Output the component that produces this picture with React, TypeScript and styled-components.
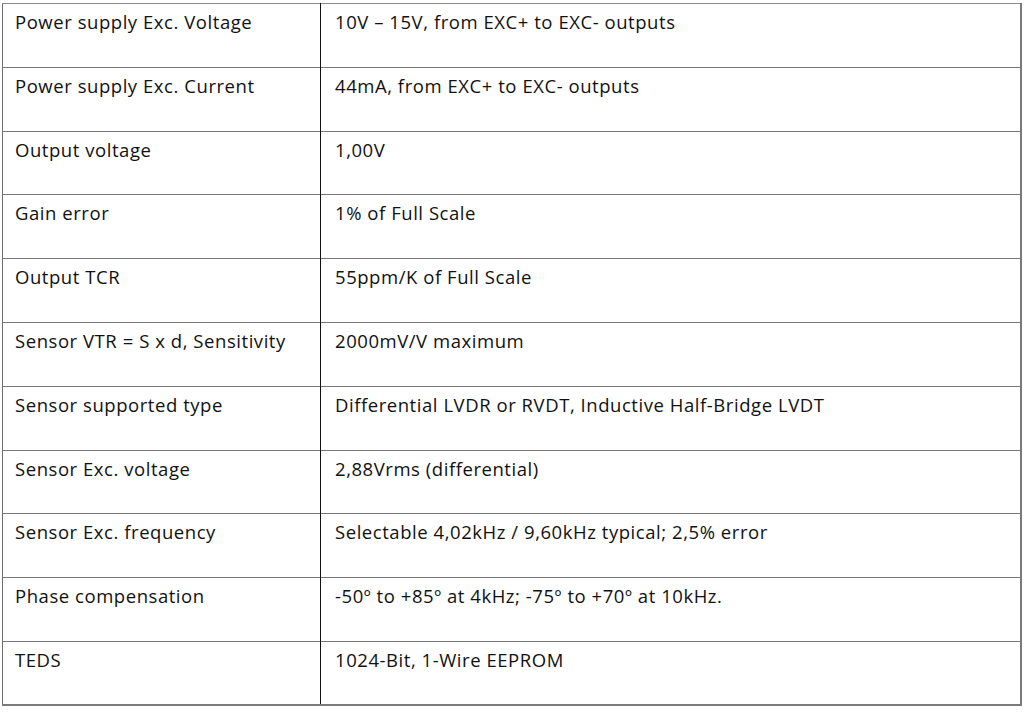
import React from 'react';
import styled, { createGlobalStyle } from 'styled-components';

const GlobalStyle = createGlobalStyle`
    html, body {
        margin: 0;
        padding: 0;
        background: #ffffff;
    }
    body {
        font-family: 'Open Sans', 'Liberation Sans', sans-serif;
        color: #111;
    }
`;

const Page = styled.div`
    padding: 3px 2px 0 2px;
`;

const SpecTable = styled.table`
    width: 1020px;
    border-collapse: collapse;
    table-layout: fixed;
    border-top: 1px solid #8a8a8a;
    border-left: 1px solid #6f6f6f;
    border-right: 2px solid #7a7a7a;
    border-bottom: 2px solid #7a7a7a;
`;

const Row = styled.tr`
    height: 63.8px;
    border-bottom: 1px solid #777;
    &:last-child {
        border-bottom: none;
    }
`;

const Cell = styled.td<{ $label?: boolean }>`
    vertical-align: top;
    padding: 5px 10px 0 ${(p) => (p.$label ? '12px' : '14px')};
    width: ${(p) => (p.$label ? '295px' : 'auto')};
    border-right: ${(p) => (p.$label ? '1.5px solid #111' : 'none')};
    font-size: 18.5px;
    line-height: 26px;
    letter-spacing: 0.55px;
    white-space: nowrap;
`;

const specs: [string, string][] = [
    ['Power supply Exc. Voltage', '10V – 15V, from EXC+ to EXC- outputs'],
    ['Power supply Exc. Current', '44mA, from EXC+ to EXC- outputs'],
    ['Output voltage', '1,00V'],
    ['Gain error', '1% of Full Scale'],
    ['Output TCR', '55ppm/K of Full Scale'],
    ['Sensor VTR = S x d, Sensitivity', '2000mV/V maximum'],
    ['Sensor supported type', 'Differential LVDR or RVDT, Inductive Half-Bridge LVDT'],
    ['Sensor Exc. voltage', '2,88Vrms (differential)'],
    ['Sensor Exc. frequency', 'Selectable 4,02kHz / 9,60kHz typical; 2,5% error'],
    ['Phase compensation', '-50º to +85º at 4kHz; -75º to +70º at 10kHz.'],
    ['TEDS', '1024-Bit, 1-Wire EEPROM'],
];

const App: React.FC = () => (
    <Page>
        <GlobalStyle />
        <SpecTable>
            <tbody>
                {specs.map(([label, value]) => (
                    <Row key={label}>
                        <Cell $label>{label}</Cell>
                        <Cell>{value}</Cell>
                    </Row>
                ))}
            </tbody>
        </SpecTable>
    </Page>
);

export default App;
